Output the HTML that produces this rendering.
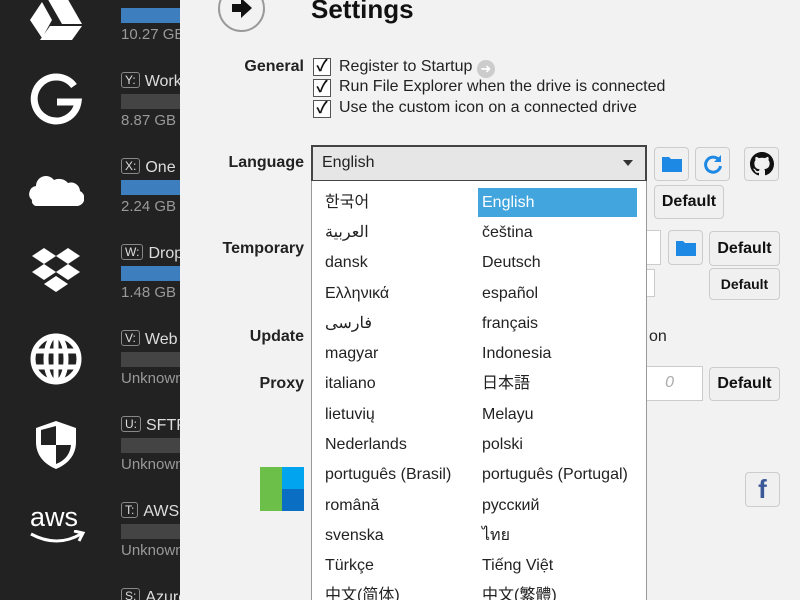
<!DOCTYPE html>
<html><head><meta charset="utf-8"><style>
*{margin:0;padding:0;box-sizing:border-box}
html{width:800px;height:600px;overflow:hidden}
body{width:800px;height:600px;overflow:hidden;position:relative;background:#f2f2f2;font-family:"Liberation Sans","Noto Sans CJK JP",sans-serif;}
#side{position:absolute;left:0;top:0;width:180px;height:600px;background:#222;overflow:hidden}
.ic{position:absolute;left:28px;width:56px;height:56px}
.dl{position:absolute;left:121px;color:#ddd;font-size:16px;white-space:nowrap}
.dl b{display:inline-block;font-weight:normal;font-size:12px;border:1px solid #888;border-radius:3px;padding:0 3px;margin-right:5px;vertical-align:2px;color:#ddd}
.bar{position:absolute;left:121px;width:60px;height:15px;background:#444}
.bar.b{background:#3d7ebf}
.sz{position:absolute;left:121px;color:#999;font-size:15px;white-space:nowrap}
.lab{position:absolute;right:496px;font-weight:bold;font-size:16px;color:#222}
.cb{position:absolute;left:313px;width:18px;height:18px;border:1.5px solid #555;background:#fff;font-size:16px;line-height:15px;text-align:center;font-weight:bold;color:#111}
.ct{position:absolute;left:339px;font-size:16px;color:#222;white-space:nowrap}
.btn{position:absolute;border:1px solid #ccc;border-radius:4px;background:#f0f0f0;font-weight:bold;font-size:16px;color:#111;text-align:center}
.inp{position:absolute;background:#fff;border:1px solid #ccc}
#list{position:absolute;left:311px;top:181px;width:336px;height:419px;background:#fff;border-left:1px solid #999;border-right:1px solid #999;overflow:hidden}
.it{position:absolute;font-size:16px;line-height:20px;height:20px;color:#222;white-space:nowrap}
</style></head><body>
<div id="side">
<svg class="ic" style="top:-8px" viewBox="0 0 56 56"><path d="M18 4h20l16 28H34z M14 10l10 18-10 18L2 28z M12 48l10-14h32l-10 14z" fill="#fff"/></svg>
<svg class="ic" style="top:72px" viewBox="0 0 56 56"><path d="M46 14A22 22 0 1 0 50 30H29" fill="none" stroke="#fff" stroke-width="7"/></svg>
<svg class="ic" style="top:160px" viewBox="0 0 56 56"><path d="M4 40a8 8 0 0 1 4-14 10 10 0 0 1 18-6 12 12 0 0 1 14 3 9 9 0 0 1 12 8 8 8 0 0 1-2 15H8a5 5 0 0 1-4-6z" fill="#fff"/></svg>
<svg class="ic" style="top:244px" viewBox="0 0 56 56"><path d="M16 4l12 8-12 8-12-8z M40 4l12 8-12 8-12-8z M16 20l12 8-12 8-12-8z M40 20l12 8-12 8-12-8z M16 40l12-8 12 8-12 8z" fill="#fff"/></svg>
<svg class="ic" style="top:331px" viewBox="0 0 56 56"><g fill="none" stroke="#fff" stroke-width="5"><circle cx="28" cy="28" r="23"/><ellipse cx="28" cy="28" rx="10" ry="23"/><path d="M5 20h46M5 36h46M28 5v46"/></g></svg>
<svg class="ic" style="top:417px" viewBox="0 0 56 56"><path d="M28 4l20 7v14c0 13-8 22-20 27C16 47 8 38 8 25V11z" fill="#fff"/><path d="M28 9v19H13V13zM28 28h15c-1 10-7 16-15 19z" fill="#222"/></svg>
<div style="position:absolute;left:30px;top:502px;color:#fff;font-size:27px;line-height:30px">aws</div>
<svg style="position:absolute;left:28px;top:530px" width="58" height="18" viewBox="0 0 58 18"><path d="M3 4q26 14 50 0" fill="none" stroke="#fff" stroke-width="3"/><path d="M46 1l9 2-4 8" fill="none" stroke="#fff" stroke-width="3"/></svg>
<div class="bar b" style="top:8px"></div><div class="sz" style="top:26px">10.27 GB</div>
<div class="dl" style="top:72px"><b>Y:</b>Work</div><div class="bar" style="top:94px"></div><div class="sz" style="top:112px">8.87 GB</div>
<div class="dl" style="top:158px"><b>X:</b>One</div><div class="bar b" style="top:180px"></div><div class="sz" style="top:198px">2.24 GB</div>
<div class="dl" style="top:244px"><b>W:</b>Drop</div><div class="bar b" style="top:266px"></div><div class="sz" style="top:284px">1.48 GB</div>
<div class="dl" style="top:330px"><b>V:</b>Web</div><div class="bar" style="top:352px"></div><div class="sz" style="top:370px">Unknown</div>
<div class="dl" style="top:416px"><b>U:</b>SFTP</div><div class="bar" style="top:438px"></div><div class="sz" style="top:456px">Unknown</div>
<div class="dl" style="top:502px"><b>T:</b>AWS</div><div class="bar" style="top:524px"></div><div class="sz" style="top:542px">Unknown</div>
<div class="dl" style="top:588px"><b>S:</b>Azure</div>
</div>
<div style="position:absolute;left:218px;top:-15px;width:47px;height:47px;border:2px solid #999;border-radius:50%"></div>
<svg style="position:absolute;left:230px;top:-3px" width="24" height="22" viewBox="0 0 24 22"><path d="M2 7h9V1l11 10-11 10v-6H2z" fill="#111"/></svg>
<div style="position:absolute;left:311px;top:-6px;font-size:26px;font-weight:bold;color:#111">Settings</div>
<div class="lab" style="top:58px">General</div>
<div class="cb" style="top:58px">✓</div><div class="ct" style="top:58px">Register to Startup <span style="display:inline-block;width:18px;height:18px;border-radius:50%;background:#ccc;color:#fff;font-size:13px;line-height:18px;text-align:center;vertical-align:-2px">➜</span></div>
<div class="cb" style="top:79px">✓</div><div class="ct" style="top:78px">Run File Explorer when the drive is connected</div>
<div class="cb" style="top:100px">✓</div><div class="ct" style="top:99px">Use the custom icon on a connected drive</div>
<div class="lab" style="top:154px">Language</div>
<div style="position:absolute;left:311px;top:145px;width:336px;height:37px;border:2px solid #444;background:#e6e6e6;font-size:16px;padding:7px 9px;color:#222">English<span style="position:absolute;right:12px;top:13px;width:0;height:0;border-left:5px solid transparent;border-right:5px solid transparent;border-top:6px solid #333"></span></div>
<div class="btn" style="left:654px;top:147px;width:35px;height:34px"><svg width="22" height="18" viewBox="0 0 22 18" style="margin-top:7px"><path d="M1 2h7l2 2h11v13H1z" fill="#1e88e5"/></svg></div>
<div class="btn" style="left:695px;top:147px;width:35px;height:34px"><svg width="22" height="22" viewBox="0 0 22 22" style="margin-top:5px"><path d="M17 7A7.5 7.5 0 1 0 18.5 13" fill="none" stroke="#1e88e5" stroke-width="3"/><path d="M19 2v7h-7z" fill="#1e88e5"/></svg></div>
<div class="btn" style="left:744px;top:147px;width:35px;height:34px"><svg width="24" height="24" viewBox="0 0 16 16" style="margin-top:4px"><path fill="#111" d="M8 0C3.6 0 0 3.6 0 8c0 3.5 2.3 6.5 5.5 7.6.4.1.5-.2.5-.4v-1.4c-2.2.5-2.7-1-2.7-1-.4-.9-.9-1.2-.9-1.2-.7-.5.1-.5.1-.5.8.1 1.2.8 1.2.8.7 1.2 1.9.9 2.3.7.1-.5.3-.9.5-1.1-1.8-.2-3.6-.9-3.6-4 0-.9.3-1.6.8-2.1-.1-.2-.4-1 .1-2.1 0 0 .7-.2 2.2.8.6-.2 1.3-.3 2-.3s1.4.1 2 .3c1.5-1 2.2-.8 2.2-.8.4 1.1.2 1.9.1 2.1.5.6.8 1.3.8 2.1 0 3.1-1.9 3.7-3.6 3.9.3.3.5.8.5 1.5v2.2c0 .2.1.5.6.4C13.7 14.5 16 11.5 16 8c0-4.4-3.6-8-8-8z"/></svg></div>
<div class="btn" style="left:654px;top:185px;width:70px;height:34px;line-height:32px">Default</div>
<div class="lab" style="top:240px">Temporary</div>
<div class="inp" style="left:620px;top:230px;width:41px;height:35px"></div>
<div class="btn" style="left:668px;top:230px;width:35px;height:35px"><svg width="22" height="18" viewBox="0 0 22 18" style="margin-top:8px"><path d="M1 2h7l2 2h11v13H1z" fill="#1e88e5"/></svg></div>
<div class="btn" style="left:709px;top:231px;width:71px;height:35px;line-height:33px">Default</div>
<div class="inp" style="left:620px;top:269px;width:35px;height:28px"></div>
<div class="btn" style="left:709px;top:268px;width:71px;height:32px;line-height:30px;font-size:14px">Default</div>
<div class="lab" style="top:328px">Update</div>
<div class="ct" style="left:649px;top:328px">on</div>
<div class="lab" style="top:375px">Proxy</div>
<div class="inp" style="left:620px;top:366px;width:83px;height:35px;font-style:italic;color:#aaa;padding:7px 28px;font-size:16px;text-align:right">0</div>
<div class="btn" style="left:709px;top:367px;width:71px;height:34px;line-height:32px">Default</div>
<div style="position:absolute;left:260px;top:467px;width:22px;height:44px;background:#6cc04a"></div>
<div style="position:absolute;left:282px;top:467px;width:22px;height:22px;background:#00a4ef"></div>
<div style="position:absolute;left:282px;top:489px;width:22px;height:22px;background:#0a6fc2"></div>
<div class="btn" style="left:745px;top:472px;width:35px;height:35px;color:#3b5998;font-size:26px;line-height:33px">f</div>
<div id="list">
<div style="position:absolute;left:166px;top:7px;width:159px;height:29px;background:#42a5dd"></div>
<div class="it" style="left:13px;top:12px">한국어</div><div class="it" style="left:170px;top:12px;color:#fff">English</div>
<div class="it" style="left:13px;top:42px">العربية</div><div class="it" style="left:170px;top:42px">čeština</div>
<div class="it" style="left:13px;top:72px">dansk</div><div class="it" style="left:170px;top:72px">Deutsch</div>
<div class="it" style="left:13px;top:103px">Ελληνικά</div><div class="it" style="left:170px;top:103px">español</div>
<div class="it" style="left:13px;top:133px">فارسی</div><div class="it" style="left:170px;top:133px">français</div>
<div class="it" style="left:13px;top:163px">magyar</div><div class="it" style="left:170px;top:163px">Indonesia</div>
<div class="it" style="left:13px;top:193px">italiano</div><div class="it" style="left:170px;top:193px">日本語</div>
<div class="it" style="left:13px;top:224px">lietuvių</div><div class="it" style="left:170px;top:224px">Melayu</div>
<div class="it" style="left:13px;top:254px">Nederlands</div><div class="it" style="left:170px;top:254px">polski</div>
<div class="it" style="left:13px;top:284px">português (Brasil)</div><div class="it" style="left:170px;top:284px">português (Portugal)</div>
<div class="it" style="left:13px;top:315px">română</div><div class="it" style="left:170px;top:315px">русский</div>
<div class="it" style="left:13px;top:345px">svenska</div><div class="it" style="left:170px;top:345px">ไทย</div>
<div class="it" style="left:13px;top:375px">Türkçe</div><div class="it" style="left:170px;top:375px">Tiếng Việt</div>
<div class="it" style="left:13px;top:405px">中文(简体)</div><div class="it" style="left:170px;top:405px">中文(繁體)</div>
</div>
</body></html>
